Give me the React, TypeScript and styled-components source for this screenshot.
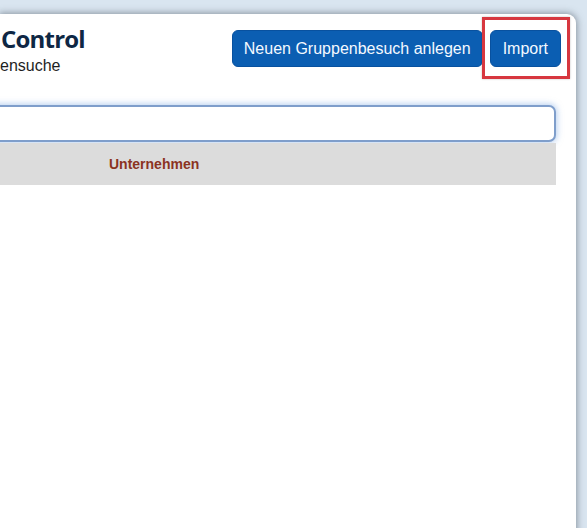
import React from "react";
import styled, { createGlobalStyle } from "styled-components";

const GlobalStyle = createGlobalStyle`
  html, body {
    margin: 0;
    padding: 0;
    height: 100%;
    overflow: hidden;
  }
  body {
    background: #d9e5f0;
    font-family: "Liberation Sans", Arial, sans-serif;
  }
  #root { height: 100%; }
`;

const Page = styled.div`
  box-sizing: border-box;
  height: 100vh;
  padding: 14px 11px 0 0;
`;

const Card = styled.div`
  height: calc(100% + 20px);
  background: #ffffff;
  border-radius: 0 9px 0 0;
  box-shadow: 0 0 7px 1px rgba(70, 80, 92, 0.55);
  overflow: hidden;
`;

const Header = styled.header`
  display: flex;
  justify-content: space-between;
  align-items: flex-start;
  padding: 11px 15px 0 0;
`;

const TitleBlock = styled.div`
  display: flex;
  flex-direction: column;
`;

const Title = styled.h1`
  margin: 0;
  padding-left: 1px;
  font-family: "Open Sans", sans-serif;
  font-weight: 700;
  font-size: 24px;
  line-height: 28px;
  color: #0e2744;
  letter-spacing: -0.8px;
  white-space: nowrap;
`;

const Subtitle = styled.div`
  margin: 4px 0 0 0;
  font-size: 16px;
  line-height: 18px;
  color: #1e1e1e;
  white-space: nowrap;
`;

const Actions = styled.div`
  display: flex;
  gap: 7px;
  margin-top: 5px;
`;

const Button = styled.button<{ $padX?: number }>`
  height: 37px;
  padding: 0 ${(p) => p.$padX ?? 11}px;
  border: 1px solid #08519f;
  border-radius: 6px;
  background: #0b5eb2;
  color: #f4f9ff;
  font-family: "Liberation Sans", Arial, sans-serif;
  font-size: 16px;
  white-space: nowrap;
  cursor: pointer;
`;

const Highlight = styled.div`
  position: relative;
  display: flex;

  &::after {
    content: "";
    position: absolute;
    top: -13px;
    bottom: -12px;
    left: -8px;
    right: -9px;
    border: 3px solid #d7373f;
    box-shadow: 0 0 2px rgba(0, 0, 0, 0.25);
    pointer-events: none;
  }
`;

const Content = styled.section`
  margin: 30px 20px 0 -12px;
`;

const SearchInput = styled.input`
  display: block;
  box-sizing: border-box;
  width: 100%;
  height: 37px;
  border: 2px solid #7f9ecb;
  border-radius: 7px;
  background: #ffffff;
  box-shadow: 0 0 6px 1px rgba(120, 165, 225, 0.55);
  outline: none;
  font-size: 16px;
`;

const TableHead = styled.div`
  display: grid;
  grid-template-columns: 121px 1fr;
  align-items: center;
  height: 42px;
  margin-top: 1px;
  background: #dcdcdc;
`;

const HeadCell = styled.div`
  font-size: 14px;
  font-weight: 700;
  color: #8b3322;
  white-space: nowrap;
`;

export default function App() {
  return (
    <>
      <GlobalStyle />
      <Page>
        <Card>
          <Header>
            <TitleBlock>
              <Title>Control</Title>
              <Subtitle>ensuche</Subtitle>
            </TitleBlock>
            <Actions>
              <Button>Neuen Gruppenbesuch anlegen</Button>
              <Highlight>
                <Button $padX={12}>Import</Button>
              </Highlight>
            </Actions>
          </Header>
          <Content>
            <SearchInput aria-label="Suche" />
            <TableHead>
              <HeadCell />
              <HeadCell>Unternehmen</HeadCell>
            </TableHead>
          </Content>
        </Card>
      </Page>
    </>
  );
}
